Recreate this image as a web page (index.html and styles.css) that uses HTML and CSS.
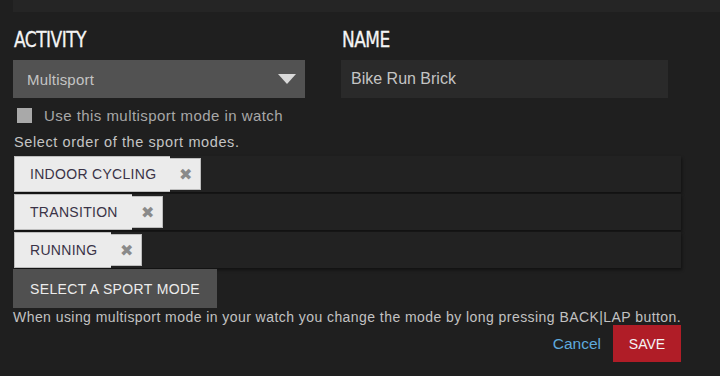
FILE: index.html
```html
<!DOCTYPE html>
<html lang="en">
  <head>
    <meta charset="UTF-8" />
    <title>Multisport mode</title>
    <link rel="stylesheet" href="styles.css">
  </head>
  <body>
    <div class="topbar"></div>
    <div class="main">
      <!-- ACTIVITY / NAME -->
      <div class="fields">
        <div class="col col-activity">
          <h2><span>ACTIVITY</span></h2>
          <div class="select">
            <span>Multisport</span>
            <span class="caret"></span>
          </div>
          <label class="check">
            <span class="box"></span>Use this multisport mode in watch
          </label>
        </div>
        <div class="col col-name">
          <h2><span>NAME</span></h2>
          <div class="input">Bike Run Brick</div>
        </div>
      </div>

      <p class="hint">Select order of the sport modes.</p>

      <!-- SPORT MODES -->
      <div class="modes">
        <div class="mode-row">
          <div class="tag"><span class="tag-label">INDOOR CYCLING</span><span class="tag-x">&#10006;</span></div>
        </div>
        <div class="mode-row">
          <div class="tag"><span class="tag-label">TRANSITION</span><span class="tag-x">&#10006;</span></div>
        </div>
        <div class="mode-row">
          <div class="tag"><span class="tag-label">RUNNING</span><span class="tag-x">&#10006;</span></div>
        </div>
      </div>

      <button class="add-mode">SELECT A SPORT MODE</button>
      <p class="note">When using multisport mode in your watch you change the mode by long pressing BACK|LAP button.</p>

      <div class="actions">
        <a class="cancel" href="#">Cancel</a>
        <button class="save">SAVE</button>
      </div>
    </div>
  </body>
</html>
```

FILE: styles.css
```css
body {
  margin: 0;
  background: #1f1f1f;
  font-family: "Liberation Sans", Arial, sans-serif;
  color: #bdbdbd;
}

.topbar {
  height: 12px;
  margin-left: 13px;
  background: #252525;
}

.main {
  padding: 0 39px 0 13px;
}

.fields {
  display: flex;
  gap: 36px;
}

.col-activity {
  width: 292px;
}

.col-name {
  width: 327px;
}

h2 {
  margin: 15px 0 0 1px;
  height: 33px;
  font-family: "Liberation Sans Narrow", "DejaVu Sans Condensed", sans-serif;
  font-weight: normal;
  font-size: 22px;
  line-height: 26px;
  letter-spacing: -0.6px;
  color: #f4f4f4;
}

h2 span {
  display: inline-block;
  transform: scaleX(0.86);
  transform-origin: left center;
  -webkit-text-stroke: 0.3px #f4f4f4;
}

.select {
  height: 38px;
  background: #525252;
  display: flex;
  align-items: center;
  justify-content: space-between;
  padding: 0 9px 0 14px;
  font-size: 15px;
  letter-spacing: 0.2px;
  color: #c4c4c4;
}

.caret {
  width: 0;
  height: 0;
  border-left: 9px solid transparent;
  border-right: 9px solid transparent;
  border-top: 10px solid #d9d9d9;
}

.input {
  height: 38px;
  background: #2a2a2a;
  display: flex;
  align-items: center;
  padding-left: 10px;
  font-size: 16px;
  color: #c4c4c4;
}

.check {
  display: flex;
  align-items: center;
  gap: 12px;
  margin: 9px 0 0 4px;
  font-size: 15px;
  letter-spacing: 0.45px;
  color: #a8a8a8;
}

.check .box {
  width: 15px;
  height: 15px;
  background: #a9a9a9;
}

.hint {
  margin: 10px 0 0 1px;
  font-size: 14.5px;
  letter-spacing: 0.6px;
  color: #c4c4c4;
}

.modes {
  margin-top: 6px;
  margin-left: 1px;
}

.mode-row {
  height: 36px;
  margin-bottom: 2px;
  background: #222;
  box-shadow: 1px 2px 3px rgba(0, 0, 0, 0.45);
  display: flex;
}

.tag {
  display: flex;
  align-items: stretch;
}

.tag-label {
  display: flex;
  align-items: center;
  padding: 0 14px 0 15px;
  background: #ebebeb;
  border: 1px solid #bdbdbd;
  border-right: none;
  font-size: 14px;
  letter-spacing: 0.3px;
  color: #3a3347;
}

.tag-x {
  display: flex;
  align-items: center;
  margin: 2px 0;
  padding: 0 8px 0 9px;
  background: #ebebeb;
  border: 1px solid #bdbdbd;
  border-left: none;
  font-size: 16px;
  color: #8a8a8a;
}

.add-mode {
  display: block;
  height: 39px;
  padding: 0 17px;
  margin-top: -1px;
  background: #505050;
  border: none;
  font-family: "Liberation Sans", Arial, sans-serif;
  font-size: 14px;
  letter-spacing: 0.35px;
  color: #ececec;
}

.note {
  margin: 1px 0 0;
  font-size: 14px;
  letter-spacing: 0.44px;
  white-space: nowrap;
  color: #c2c2c2;
}

.actions {
  display: flex;
  justify-content: flex-end;
  align-items: center;
  gap: 12px;
  margin-top: 0;
}

.cancel {
  color: #5ea9dc;
  font-size: 15.5px;
  text-decoration: none;
}

.save {
  width: 68px;
  height: 37px;
  background: #b01d27;
  border: none;
  font-family: "Liberation Sans", Arial, sans-serif;
  font-size: 14px;
  color: #f4f4f4;
}
```
